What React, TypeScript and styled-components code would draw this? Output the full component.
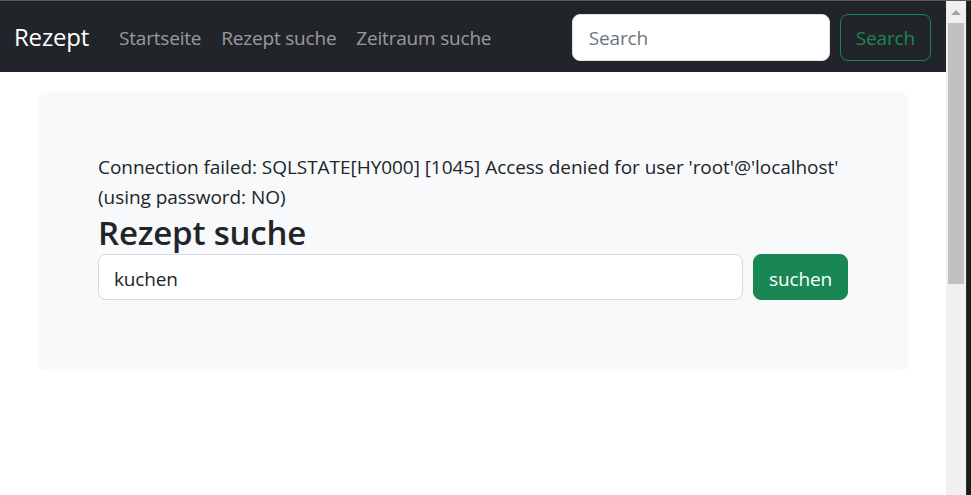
import React from "react";
import styled, { createGlobalStyle } from "styled-components";

const GlobalStyle = createGlobalStyle`
  html, body {
    margin: 0;
    padding: 0;
    height: 100%;
    overflow: hidden;
  }
  body {
    font-family: "Open Sans", "Noto Sans", sans-serif;
    letter-spacing: -0.15px;
    color: #212529;
    background: #ffffff;
  }
  * {
    box-sizing: border-box;
  }
`;

const Window = styled.div`
  display: flex;
  flex-direction: column;
  height: 100vh;
  border-top: 1px solid #5a5a5a;
`;

const WindowBody = styled.div`
  flex: 1;
  display: flex;
  min-height: 0;
`;

const Page = styled.div`
  flex: 1;
  min-width: 0;
  overflow: hidden;
  background: #ffffff;
`;

const Navbar = styled.nav`
  height: 71px;
  background: #212529;
  display: flex;
  align-items: center;
  padding: 2px 15px 0 14px;
`;

const Brand = styled.a`
  color: #ffffff;
  font-size: 24px;
  letter-spacing: -0.2px;
  line-height: 1;
  margin-right: 20px;
  text-decoration: none;
  padding-bottom: 1px;
`;

const NavList = styled.ul`
  display: flex;
  list-style: none;
  margin: 0;
  padding: 0;
  flex: 1;
`;

const NavLink = styled.a`
  display: block;
  padding: 10px 10px;
  font-size: 19px;
  letter-spacing: -0.2px;
  color: rgba(255, 255, 255, 0.55);
  text-decoration: none;
`;

const NavSearch = styled.form`
  display: flex;
  gap: 10px;
`;

const NavInput = styled.input`
  width: 258px;
  height: 47px;
  padding: 0 16px;
  font-family: inherit;
  font-size: 19px;
  letter-spacing: -0.15px;
  border: 1px solid #dee2e6;
  border-radius: 8px;
  background: #ffffff;
  color: #212529;
  outline: none;

  &::placeholder {
    color: #6c757d;
  }
`;

const Button = styled.button<{ $variant: "outline" | "solid" }>`
  height: 47px;
  padding: 0 15px;
  font-family: inherit;
  font-size: 19px;
  letter-spacing: -0.15px;
  border-radius: 8px;
  border: 1px solid #198754;
  cursor: pointer;
  background: ${(p) => (p.$variant === "solid" ? "#198754" : "transparent")};
  color: ${(p) => (p.$variant === "solid" ? "#ffffff" : "#198754")};
`;

const Main = styled.main`
  padding: 20px 38px 0;
`;

const Panel = styled.section`
  background: #f8f9fa;
  border-radius: 8px;
  padding: 60px 60px 71px;
`;

const ErrorText = styled.p`
  margin: 0;
  font-size: 19px;
  line-height: 30px;
  letter-spacing: -0.05px;
`;

const Heading = styled.h2`
  margin: 0;
  font-size: 33px;
  line-height: 42px;
  font-weight: 600;
  letter-spacing: -0.2px;
`;

const SearchRow = styled.form`
  display: flex;
  gap: 10px;
`;

const SearchInput = styled(NavInput)`
  flex: 1;
  width: auto;
  height: 46px;
  padding: 3px 15px 0;
  border-color: #d5d9de;
`;

const SearchButton = styled(Button)`
  height: 46px;
  width: 95px;
  padding: 3px 0 0;
`;

const Scrollbar = styled.div`
  width: 20px;
  background: #f0f0f0;
  display: flex;
  flex-direction: column;
  align-items: center;
`;

const ArrowUp = styled.div`
  width: 20px;
  height: 22px;
  display: flex;
  align-items: center;
  justify-content: center;

  &::before {
    content: "";
    border-left: 5px solid transparent;
    border-right: 5px solid transparent;
    border-bottom: 5px solid #a3a3a3;
  }
`;

const Thumb = styled.div`
  width: 16px;
  height: 261px;
  background: #c1c1c1;
`;

const WindowEdge = styled.div`
  width: 5px;
  background: #1c1c1c;
  border-left: 1px solid #2c2c2c;
`;

export default function App() {
  return (
    <>
      <GlobalStyle />
      <Window>
        <WindowBody>
          <Page>
            <Navbar>
              <Brand href="#">Rezept</Brand>
              <NavList>
                <li>
                  <NavLink href="#">Startseite</NavLink>
                </li>
                <li>
                  <NavLink href="#">Rezept suche</NavLink>
                </li>
                <li>
                  <NavLink href="#">Zeitraum suche</NavLink>
                </li>
              </NavList>
              <NavSearch onSubmit={(e) => e.preventDefault()}>
                <NavInput type="search" placeholder="Search" />
                <Button $variant="outline" type="submit">
                  Search
                </Button>
              </NavSearch>
            </Navbar>
            <Main>
              <Panel>
                <ErrorText>
                  Connection failed: SQLSTATE[HY000] [1045] Access denied for
                  user 'root'@'localhost' (using password: NO)
                </ErrorText>
                <Heading>Rezept suche</Heading>
                <SearchRow onSubmit={(e) => e.preventDefault()}>
                  <SearchInput type="text" defaultValue="kuchen" />
                  <SearchButton $variant="solid" type="submit">
                    suchen
                  </SearchButton>
                </SearchRow>
              </Panel>
            </Main>
          </Page>
          <Scrollbar>
            <ArrowUp />
            <Thumb />
          </Scrollbar>
          <WindowEdge />
        </WindowBody>
      </Window>
    </>
  );
}
